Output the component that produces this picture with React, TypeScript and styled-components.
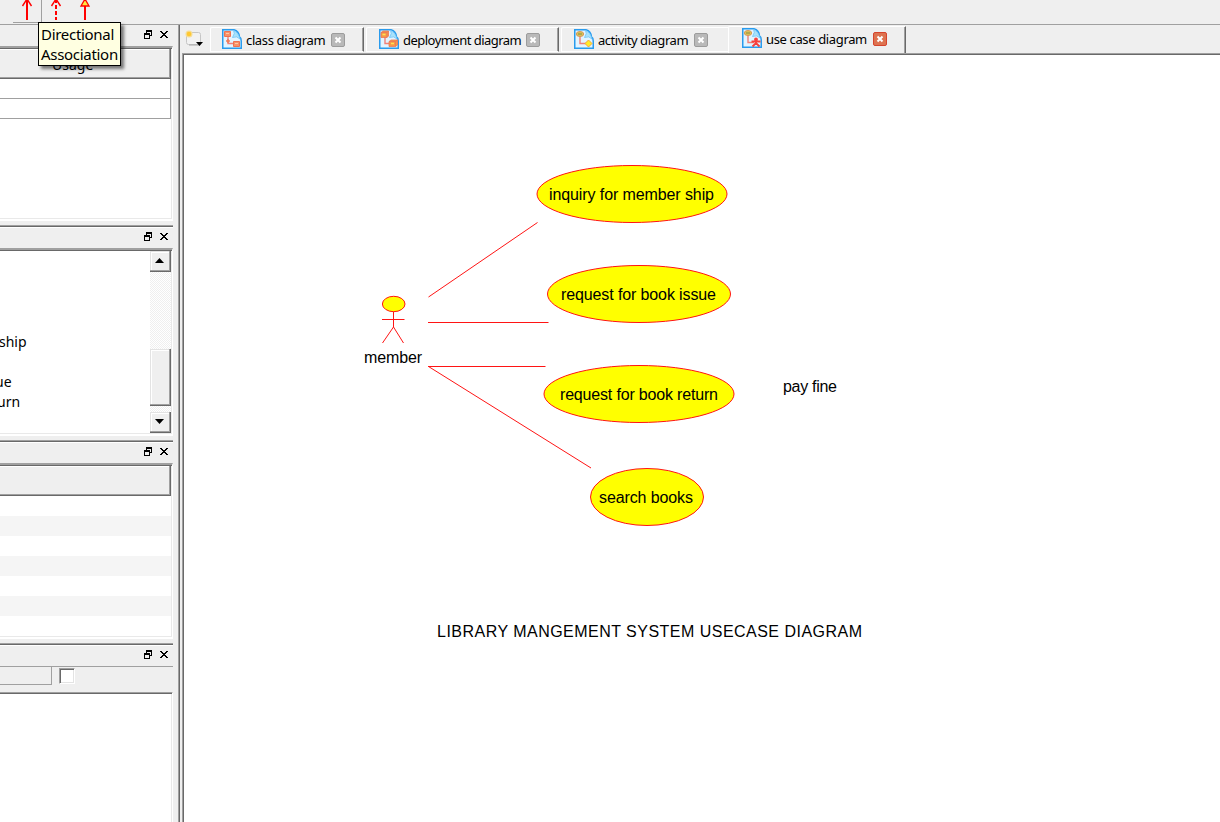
import React from "react";
import styled, { createGlobalStyle, css } from "styled-components";

const Global = createGlobalStyle`
  * { box-sizing: border-box; }
  body { margin: 0; background: #fff; overflow: hidden; }
`;

const Window = styled.div`
  width: 1220px;
  height: 822px;
  display: flex;
  flex-direction: column;
  background: #efefef;
  color: #000;
  overflow: hidden;
  font-family: "Noto Sans", "Open Sans", sans-serif;
`;

const Toolbar = styled.header`
  height: 25px;
  flex: none;
  display: flex;
  padding-left: 13px;
  border-bottom: 1px solid #a0a0a0;
`;

const ToolButton = styled.div<{ $raised?: boolean }>`
  width: 29px;
  height: 23px;
  border-right: 1px solid ${(p) => (p.$raised ? "#a0a0a0" : "transparent")};
  border-bottom: 1px solid ${(p) => (p.$raised ? "#a0a0a0" : "transparent")};
  svg { display: block; }
`;

const Body = styled.div`
  flex: 1;
  min-height: 0;
  display: flex;
`;

const Docks = styled.aside`
  width: 178px;
  flex: none;
  display: flex;
  flex-direction: column;
`;

const Dock = styled.section<{ $height: number }>`
  width: 173px;
  height: ${(p) => p.$height}px;
  flex: none;
  display: flex;
  flex-direction: column;
  & + & { border-top: 1px solid #a0a0a0; box-shadow: inset 0 1px #696969, inset 0 2px #fff; }
`;

const DockTitle = styled.div<{ $height: number }>`
  height: ${(p) => p.$height}px;
  flex: none;
  display: flex;
  justify-content: flex-end;
  align-items: center;
  gap: 8px;
  padding: 0 5px 2px 0;
  svg { display: block; }
`;

const DockContent = styled.div<{ $height: number; $thin?: boolean }>`
  height: ${(p) => p.$height}px;
  flex: none;
  display: flex;
  flex-direction: column;
  background: #fff;
  border-top: ${(p) => (p.$thin ? 1 : 2)}px solid #a0a0a0;
  border-right: 1px solid #fff;
  border-bottom: 2px solid #fff;
  padding-right: 1px;
  box-shadow: inset 0 1px #696969, inset -1px -1px #e9e9e9;
`;

const HeaderCell = styled.div`
  height: 31px;
  width: 171px;
  flex: none;
  border-top: 1px solid #696969;
  border-right: 1px solid #696969;
  border-bottom: 1px solid #696969;
  box-shadow: inset -1px -1px #a0a0a0, inset 0 1px #fff;
  background: #efefef;
  padding: 6px 0 0 52px;
  font-size: 14px;
  line-height: 20px;
`;

const GridRow = styled.div`
  height: 20px;
  width: 171px;
  flex: none;
  border-bottom: 1px solid #a0a0a0;
  border-right: 1px solid #a0a0a0;
`;

const Stripe = styled.div<{ $alt: boolean }>`
  height: 20px;
  width: 171px;
  flex: none;
  background: ${(p) => (p.$alt ? "#f5f5f5" : "#fff")};
`;

const TreeArea = styled.div`
  display: flex;
  height: 183px;
`;

const TreeList = styled.div`
  width: 150px;
  height: 183px;
  padding-top: 82px;
  overflow: hidden;
`;

const TreeItem = styled.div<{ $shift: number }>`
  height: 20px;
  margin-left: ${(p) => p.$shift}px;
  font-size: 14px;
  line-height: 20px;
  white-space: nowrap;
`;

const ScrollBar = styled.div`
  width: 21px;
  height: 182px;
  margin-top: 1px;
  display: flex;
  flex-direction: column;
  background: repeating-conic-gradient(#efefef 0 25%, #fff 0 50%) 0 0 / 2px 2px;
`;

const raised = css`
  background: #efefef;
  border-right: 1px solid #696969;
  border-bottom: 1px solid #696969;
  box-shadow: inset -1px -1px #a0a0a0, inset 1px 1px #e3e3e3, inset 2px 2px #fff;
`;

const ScrollButton = styled.div`
  ${raised}
  height: 21px;
  flex: none;
  svg { display: block; margin: 5px 0 0 5px; }
`;

const ScrollThumb = styled.div`
  ${raised}
  height: 57px;
  margin: 77px 0 6px;
  flex: none;
`;

const FormBar = styled.div`
  height: 26px;
  flex: none;
  display: flex;
  gap: 7px;
  border-top: 1px solid #a0a0a0;
`;

const FieldLabel = styled.div`
  width: 52px;
  height: 18px;
  border-right: 1px solid #a0a0a0;
  border-bottom: 1px solid #a0a0a0;
`;

const CheckBox = styled.div`
  width: 16px;
  height: 16px;
  margin-top: 1px;
  background: #fff;
  border: 1px solid;
  border-color: #a0a0a0 #fff #fff #a0a0a0;
  box-shadow: inset 1px 1px #696969, inset -1px -1px #e3e3e3;
`;

const Editor = styled.main`
  flex: 1;
  min-width: 0;
  display: flex;
  flex-direction: column;
  border-left: 1px solid #a0a0a0;
  box-shadow: inset 1px 0 #696969;
  padding-left: 3px;
`;

const TabBar = styled.nav`
  height: 28px;
  flex: none;
  display: flex;
  padding-left: 3px;
`;

const NewTab = styled.div`
  width: 25px;
  padding-top: 4px;
  svg { display: block; }
`;

const Tab = styled.div<{ $width: number; $active?: boolean; $pad: number; $line?: boolean; $gap?: number }>`
  width: ${(p) => p.$width}px;
  height: ${(p) => (p.$active ? 27 : 25)}px;
  margin-top: ${(p) => (p.$active ? 1 : 2)}px;
  margin-right: ${(p) => p.$gap ?? 0}px;
  padding-left: ${(p) => p.$pad}px;
  flex: none;
  display: flex;
  align-items: flex-start;
  border-top: 1px solid #fff;
  border-left: 1px solid #fff;
  border-bottom: ${(p) => (p.$active ? "0" : "1px solid #fff")};
  border-radius: 2px 0 0 0;
  ${(p) => p.$line && "border-right: 1px solid #696969; box-shadow: inset -1px 0 #a0a0a0;"}
  > svg { display: block; flex: none; margin-top: 1px; }
`;

const TabLabel = styled.span<{ $width: number; $spacing: number }>`
  width: ${(p) => p.$width}px;
  margin: 2px 0 0 4px;
  font-size: 13px;
  line-height: 20px;
  letter-spacing: ${(p) => p.$spacing}px;
  white-space: nowrap;
`;

const CloseBox = styled.span<{ $active?: boolean }>`
  width: 14px;
  height: 14px;
  margin-top: 5px;
  border-radius: 2px;
  border: 1px solid ${(p) => (p.$active ? "#d6442c" : "#9c9c9c")};
  background: ${(p) => (p.$active ? "#dd7350" : "#b9b9b9")};
  svg { display: block; }
`;

const Canvas = styled.div`
  flex: 1;
  min-height: 0;
  background: #fff;
  border-top: 1px solid #a0a0a0;
  border-left: 1px solid #a0a0a0;
  box-shadow: inset 1px 1px #696969;
  svg { display: block; }
`;

const Tooltip = styled.div`
  position: absolute;
  left: 38px;
  top: 22px;
  width: 83px;
  height: 44px;
  padding: 1px 0 0 2px;
  border: 1px solid #000;
  background: #ffffe1;
  box-shadow: 3px 3px 3px rgba(0, 0, 0, 0.5);
  font-size: 15px;
  line-height: 20px;
  letter-spacing: -0.3px;
  white-space: nowrap;
`;

const DockButtons = () => (
  <>
    <svg width="8" height="9" viewBox="0 0 8 9" shapeRendering="crispEdges">
      <path d="M2 0h6v6H6V5h1V2H3v1H2z" fill="#000" />
      <path d="M0 3h6v6H0zM1 5v3h4V5z" fill="#000" fillRule="evenodd" />
    </svg>
    <svg width="8" height="7" viewBox="0 0 8 7" shapeRendering="crispEdges">
      <path d="M0 0h2v1h1v1h2V1h1V0h2v1H7v1H6v1H5v1h1v1h1v1h1v1H6V6H5V5H3v1H2v1H0V6h1V5h1V4h1V3H2V2H1V1H0z" fill="#000" />
    </svg>
  </>
);

const ArrowIcon = ({ kind }: { kind: "solid" | "dashed" | "filled" }) => (
  <svg width="28" height="22" viewBox="0 0 28 22" fill="none" stroke="#f00">
    <path d="M14 0V20" strokeWidth="2" strokeDasharray={kind === "dashed" ? "4 2" : undefined} strokeDashoffset={kind === "dashed" ? 1 : 0} />
    {kind === "filled" ? (
      <path d="M10 6L14 -1L18 6Z" fill="#ffe840" strokeWidth="1.3" />
    ) : (
      <path d="M9.5 6L14 -1L18.5 6" strokeWidth="1.4" />
    )}
  </svg>
);

type Kind = "class" | "deployment" | "activity" | "usecase";

const DiagramIcon = ({ kind }: { kind: Kind }) => (
  <svg width="20" height="20" viewBox="0 0 20 20">
    <path d="M.75 .75H12Q17 2 17.500 8Q19.250 9 19.250 12V19.250H.75Z" fill="#e3f4ff" stroke="#299bed" strokeWidth="1.5" />
    <path d="M11.500 1.500Q13.500 4 10.500 8.500Q15 6.500 18 10Q16.500 3.500 11.500 1.500Z" fill="#a9e2fb" stroke="#6cc3f7" strokeWidth=".8" />
    <path d="M6 7V14.5H12" fill="none" stroke="#f08078" strokeWidth="1.4" />
    {kind === "class" && (
      <g fill="#f79268" stroke="#ef7150">
        <path d="M2.500 2.500h6v5h-6zM11.500 12.500h6v5h-6z" />
        <path d="M4 4.500h3M13 14.500h3" stroke="#ffc7a4" />
        <circle cx="6" cy="12" r="1.3" />
      </g>
    )}
    {kind === "deployment" && (
      <g stroke="#ee7655" strokeWidth=".8">
        <path d="M2 3.500L4 2H9.500V7L8 8.500H2ZM10 12.500L12 11H18.500V16L16.500 17.500H10Z" fill="#f69a48" />
        <path d="M2 3.500H8V8.500M8 3.500L9.500 2M10 12.500H16.500V17.500M16.500 12.500L18.500 11" fill="none" />
        <path d="M3.500 5.500h3M12 14.500h3" stroke="#ffe153" strokeWidth="1.5" />
      </g>
    )}
    {(kind === "activity" || kind === "usecase") && (
      <>
        <ellipse cx="6" cy="5" rx="3.700" ry="2.500" fill="#d8c756" stroke="#d9965a" />
        <path d="M4 5H8" stroke="#8b8545" />
      </>
    )}
    {kind === "activity" && <path d="M14.500 11L18 14.500L14.500 18L11 14.500Z" fill="#ffed28" stroke="#f7a234" />}
    {kind === "usecase" && (
      <g stroke="#f8403c" strokeWidth="1.900" fill="none">
        <path d="M9.500 13.500H18.500M14 11V15.500M10.500 18.500L14 15L17.500 18.500" />
        <circle cx="14" cy="11.500" r="1" fill="#f8403c" />
      </g>
    )}
  </svg>
);

const tabs: { kind: Kind; label: string; width: number; pad: number; text: number; spacing: number; line?: boolean; gap?: number; active?: boolean }[] = [
  { kind: "class", label: "class diagram", width: 154, pad: 11, text: 85, spacing: -0.36, line: true, gap: 2 },
  { kind: "deployment", label: "deployment diagram", width: 193, pad: 12, text: 123, spacing: -0.53, line: true, gap: 2 },
  { kind: "activity", label: "activity diagram", width: 167, pad: 12, text: 96, spacing: -0.46 },
  { kind: "usecase", label: "use case diagram", width: 178, pad: 13, text: 107, spacing: -0.36, line: true, active: true },
];

const useCases = [
  { label: "inquiry for member ship", cx: 632, cy: 194, rx: 95, tx: 549, w: 165 },
  { label: "request for book issue", cx: 639, cy: 294, rx: 91.5, tx: 561, w: 155 },
  { label: "request for book return", cx: 639, cy: 394, rx: 95, tx: 560, w: 158 },
  { label: "search books", cx: 647, cy: 497, rx: 56.5, tx: 599, w: 94 },
];

const Diagram = () => (
  <svg width="1036" height="767" viewBox="183 54 1036 767" fontFamily='"Liberation Sans", Arial, sans-serif' fontSize="16">
    <g stroke="#ff1414" fill="none">
      <path d="M428.500 297L537.500 222.500M428 322.500H548.500M428 366.500H545.500M428.500 366.500L591 468" />
      <path d="M393.500 311V327M382 319.500H404.500M393.500 327L382.500 343M393.500 327L403.500 343" />
      <ellipse cx="393.700" cy="304" rx="11.300" ry="7.700" fill="#ff0" />
      {useCases.map((u) => (
        <ellipse key={u.label} cx={u.cx} cy={u.cy} rx={u.rx} ry="28.500" fill="#ff0" />
      ))}
    </g>
    {useCases.map((u) => (
      <text key={u.label} x={u.tx} y={u.cy + 6} textLength={u.w}>{u.label}</text>
    ))}
    <text x="364" y="363" textLength="58">member</text>
    <text x="783" y="392" textLength="54">pay fine</text>
    <text x="437" y="637" textLength="425">LIBRARY MANGEMENT SYSTEM USECASE DIAGRAM</text>
  </svg>
);

export default function App() {
  return (
    <Window>
      <Global />
      <Toolbar>
        <ToolButton $raised><ArrowIcon kind="solid" /></ToolButton>
        <ToolButton><ArrowIcon kind="dashed" /></ToolButton>
        <ToolButton><ArrowIcon kind="filled" /></ToolButton>
      </Toolbar>
      <Body>
        <Docks>
          <Dock $height={200}>
            <DockTitle $height={21}><DockButtons /></DockTitle>
            <DockContent $height={175}>
              <HeaderCell>Usage</HeaderCell>
              <GridRow />
              <GridRow />
            </DockContent>
          </Dock>
          <Dock $height={215}>
            <DockTitle $height={22}><DockButtons /></DockTitle>
            <DockContent $height={188}>
              <TreeArea>
                <TreeList>
                  <TreeItem $shift={-1}>ship</TreeItem>
                  <TreeItem $shift={0} />
                  <TreeItem $shift={-5}>ue</TreeItem>
                  <TreeItem $shift={-3}>urn</TreeItem>
                </TreeList>
                <ScrollBar>
                  <ScrollButton>
                    <svg width="10" height="8"><path d="M0 7L4.500 2L9 7Z" /></svg>
                  </ScrollButton>
                  <ScrollThumb />
                  <ScrollButton>
                    <svg width="10" height="8"><path d="M0 2L4.500 7L9 2Z" /></svg>
                  </ScrollButton>
                </ScrollBar>
              </TreeArea>
            </DockContent>
          </Dock>
          <Dock $height={203}>
            <DockTitle $height={22}><DockButtons /></DockTitle>
            <DockContent $height={176}>
              <HeaderCell />
              {[0, 1, 2, 3, 4, 5].map((i) => <Stripe key={i} $alt={i % 2 === 1} />)}
            </DockContent>
          </Dock>
          <Dock $height={184}>
            <DockTitle $height={22}><DockButtons /></DockTitle>
            <FormBar>
              <FieldLabel />
              <CheckBox />
            </FormBar>
            <DockContent $height={135} $thin />
          </Dock>
        </Docks>
        <Editor>
          <TabBar>
            <NewTab>
              <svg width="20" height="20" viewBox="0 0 20 20">
                <rect x="1.500" y="3.500" width="14" height="12" rx="2" fill="#f2f2f2" stroke="#c6c6c6" />
                <path d="M4 16H15" stroke="#aaa" />
                <circle cx="4" cy="5" r="3.500" fill="#f6dd93" />
                <circle cx="4" cy="5" r="2.300" fill="#ffc832" />
                <path d="M11 13H18L14.500 17Z" fill="#000" />
              </svg>
            </NewTab>
            {tabs.map((t) => (
              <Tab key={t.kind} $width={t.width} $pad={t.pad} $line={t.line} $gap={t.gap} $active={t.active}>
                <DiagramIcon kind={t.kind} />
                <TabLabel $width={t.text} $spacing={t.spacing}>{t.label}</TabLabel>
                <CloseBox $active={t.active}>
                  <svg width="12" height="12"><path d="M3.500 3.500L8.500 8.500M8.500 3.500L3.500 8.500" stroke="#fff" strokeWidth="2" /></svg>
                </CloseBox>
              </Tab>
            ))}
          </TabBar>
          <Canvas><Diagram /></Canvas>
        </Editor>
      </Body>
      <Tooltip>Directional<br />Association</Tooltip>
    </Window>
  );
}
